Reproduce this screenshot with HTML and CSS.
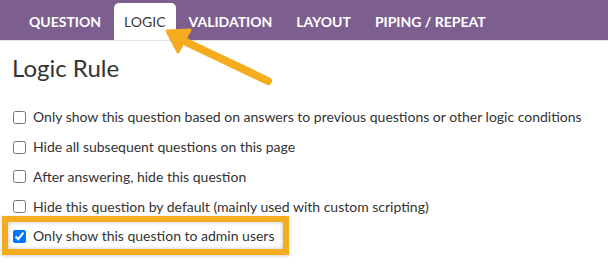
FILE: index.html
```html
<!DOCTYPE html>
<html lang="en">
<head>
  <meta charset="UTF-8">
  <title>Logic Rule</title>
  <link rel="stylesheet" href="styles.css">
</head>
<body>
  <div id="tabs">
    <span class="tab">QUESTION</span>
    <span class="tab active">LOGIC</span>
    <span class="tab">VALIDATION</span>
    <span class="tab">LAYOUT</span>
    <span class="tab">PIPING / REPEAT</span>
  </div>

  <div id="content">
    <h1>Logic Rule</h1>
    <ul class="options">
      <li><label><input type="checkbox"> Only show this question based on answers to previous questions or other logic conditions</label></li>
      <li><label><input type="checkbox"> Hide all subsequent questions on this page</label></li>
      <li><label><input type="checkbox"> After answering, hide this question</label></li>
      <li><label><input type="checkbox"> Hide this question by default (mainly used with custom scripting)</label></li>
      <li class="highlight"><label><input type="checkbox" checked> Only show this question to admin users</label></li>
    </ul>
  </div>

  <!-- callout arrow pointing at the Logic tab -->
  <svg class="arrow" width="120" height="70" viewBox="0 0 120 70">
    <line x1="22" y1="14" x2="104" y2="53" stroke="#f5ac1f" stroke-width="8" stroke-linecap="round"/>
    <polygon points="3,3 26,2 14,24" fill="#f5ac1f" stroke="#f5ac1f" stroke-width="3" stroke-linejoin="round"/>
  </svg>
</body>
</html>
```

FILE: styles.css
```css
body {
  margin: 0;
  font-family: Lato, "Open Sans", sans-serif;
  color: #333;
  background: #fff;
  position: relative;
  width: 608px;
  height: 266px;
  overflow: hidden;
}
#tabs {
  background-color: #7d5f8f;
  height: 40px;
  display: flex;
  align-items: flex-end;
  padding-left: 17px;
  border-bottom: 1px solid #e4e0e6;
}
.tab {
  color: #fff;
  font-weight: bold;
  font-size: 14px;
  height: 37px;
  line-height: 38px;
  padding: 0 12px;
  white-space: nowrap;
}
.tab.active {
  background: #fff;
  color: #3a3a3a;
  font-weight: normal;
  border-radius: 5px 5px 0 0;
  padding: 0 10px;
  margin: 0 1px;
}
#content {
  padding: 0 12px;
}
h1 {
  font-weight: normal;
  font-size: 24px;
  margin: 12px 0 0;
  line-height: 30px;
}
.options {
  list-style: none;
  margin: 19px 0 0;
  padding: 0;
}
.options li {
  height: 29.75px;
  display: flex;
  align-items: center;
  font-size: 14px;
  white-space: nowrap;
}
.options label {
  display: flex;
  align-items: center;
}
.options input {
  width: 13px;
  height: 13px;
  margin: 1px 7px 0 1px;
}
.options li.highlight label {
  margin-left: -10px;
  padding: 0 8px 0 4px;
  border: 6px solid #f5ac1f;
  box-shadow: inset 0 0 4px rgba(0, 0, 0, 0.25), 0 1px 3px rgba(0, 0, 0, 0.2);
  height: 27px;
}
.arrow {
  position: absolute;
  left: 164px;
  top: 28px;
}
```
